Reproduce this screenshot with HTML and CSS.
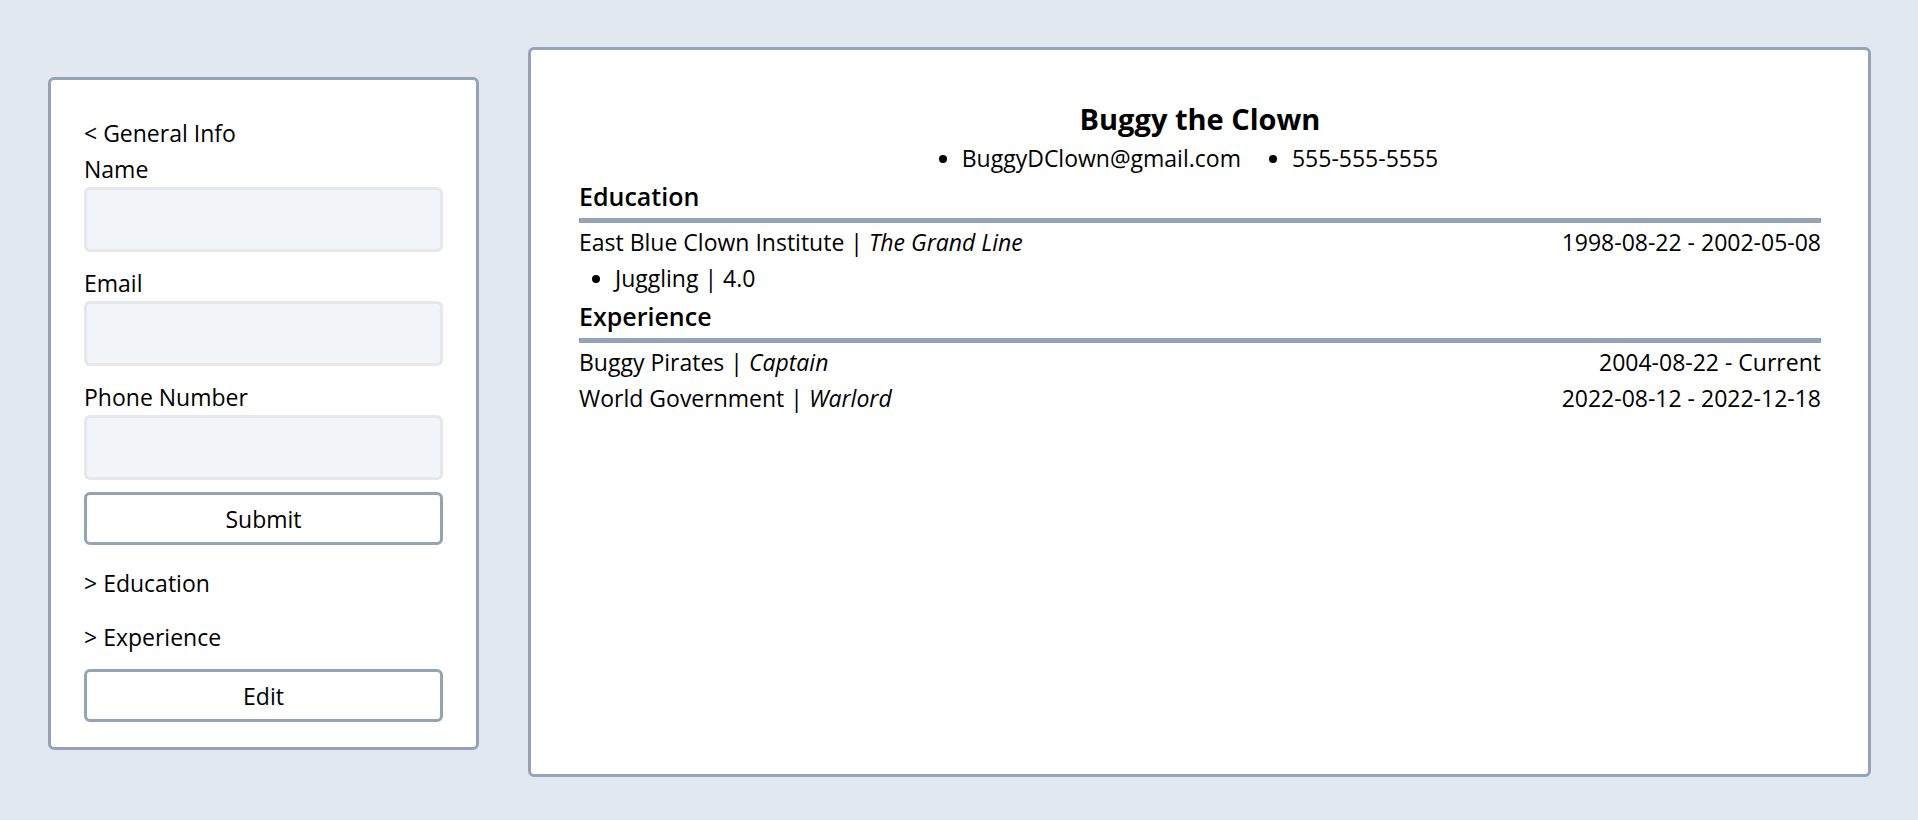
FILE: index.html
```html
<!DOCTYPE html>
<html lang="en">
<head>
<meta charset="utf-8">
<title>CV Builder</title>
<link rel="stylesheet" href="styles.css">
</head>
<body>
<main class="app">
  <aside class="editor">
    <div class="section-toggle">&lt; General Info</div>
    <form class="general-form">
      <label class="field-label" for="name">Name</label>
      <input class="field-input" id="name" type="text">
      <label class="field-label" for="email">Email</label>
      <input class="field-input" id="email" type="text">
      <label class="field-label" for="phone">Phone Number</label>
      <input class="field-input last" id="phone" type="text">
      <button class="btn" type="button">Submit</button>
    </form>
    <div class="section-toggle toggle-edu">&gt; Education</div>
    <div class="section-toggle toggle-exp">&gt; Experience</div>
    <button class="btn btn-edit" type="button">Edit</button>
  </aside>

  <section class="resume">
    <h1 class="resume-name">Buggy the Clown</h1>
    <ul class="contact">
      <li>BuggyDClown@gmail.com</li>
      <li>555-555-5555</li>
    </ul>

    <h2 class="resume-heading">Education</h2>
    <div class="entry">
      <span>East Blue Clown Institute | <em>The Grand Line</em></span>
      <span>1998-08-22 - 2002-05-08</span>
    </div>
    <ul class="details">
      <li>Juggling | 4.0</li>
    </ul>

    <h2 class="resume-heading">Experience</h2>
    <div class="entry">
      <span>Buggy Pirates | <em>Captain</em></span>
      <span>2004-08-22 - Current</span>
    </div>
    <div class="entry">
      <span>World Government | <em>Warlord</em></span>
      <span>2022-08-12 - 2022-12-18</span>
    </div>
  </section>
</main>
</body>
</html>
```

FILE: styles.css
```css
* {
  box-sizing: border-box;
}

html, body {
  margin: 0;
  padding: 0;
}

body {
  background: #e2e8f0;
  font-family: "Open Sans", "Noto Sans", sans-serif;
  font-size: 23px;
  line-height: 36px;
  color: #000;
}

.app {
  display: flex;
  align-items: flex-start;
  gap: 49px;
  padding: 47px 47px 0 48px;
}

.editor {
  width: 431px;
  flex: none;
  margin-top: 30px;
  background: #fff;
  border: 3px solid #94a3b8;
  border-radius: 6px;
  padding: 35px 33px 25px 33px;
  display: flex;
  flex-direction: column;
}

.section-toggle {
  height: 36px;
  white-space: nowrap;
}

.toggle-edu {
  margin-top: 20px;
}

.toggle-exp {
  margin-top: 18px;
}

.general-form {
  display: flex;
  flex-direction: column;
  margin: 0;
}

.field-label {
  display: block;
  height: 36px;
}

.field-input {
  display: block;
  width: 100%;
  height: 65px;
  margin: 0 0 13px 0;
  background: #f1f5f9;
  border: 3px solid #e5e7eb;
  border-radius: 6px;
  font: inherit;
  padding: 0 12px;
}

.field-input.last {
  margin-bottom: 12px;
}

.btn {
  display: block;
  width: 100%;
  height: 53px;
  background: #fff;
  border: 3px solid #94a3b8;
  border-radius: 6px;
  font: inherit;
  color: #000;
  padding: 0;
  text-align: center;
}

.btn-edit {
  margin-top: 14px;
}

.resume {
  flex: 1;
  height: 730px;
  background: #fff;
  border: 3px solid #94a3b8;
  border-radius: 6px;
  padding: 49px 47px 0 48px;
}

.resume-name {
  margin: 0;
  font-size: 29px;
  font-weight: 700;
  line-height: 40px;
  text-align: center;
}

.contact {
  display: flex;
  justify-content: center;
  gap: 51px;
  margin: 0;
  padding: 1px 0 0 0;
  height: 36px;
  list-style: disc outside;
}

.contact li {
  margin: 0;
}

.resume-heading {
  margin: 0;
  font-size: 25px;
  font-weight: 600;
  line-height: 41px;
  height: 48px;
  padding: 1px 0 1px 0;
  border-bottom: 5px solid #94a3b8;
}

.entry {
  display: flex;
  justify-content: space-between;
  height: 36px;
  padding-top: 1px;
}

.entry em {
  font-style: italic;
}

.details {
  margin: 0;
  padding: 1px 0 0 36px;
  height: 36px;
  list-style: disc outside;
}
```
